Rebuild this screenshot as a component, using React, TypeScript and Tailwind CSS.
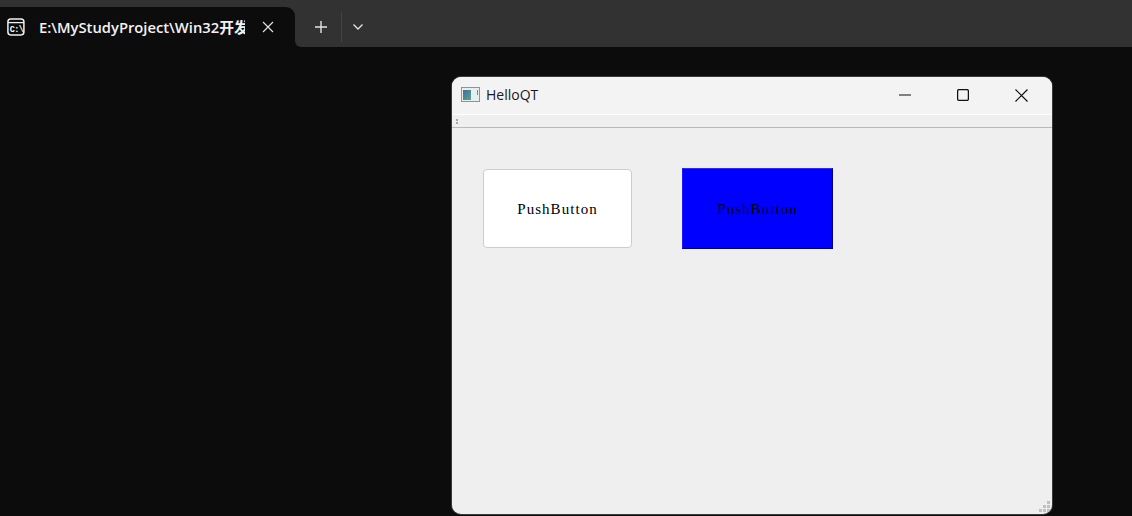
import React from "react";

const TerminalIcon = () => (
  <svg width="18" height="18" viewBox="0 0 18 18" fill="none" className="shrink-0">
    <rect x="0.9" y="0.9" width="16" height="16" rx="2.8" stroke="#f0f0f0" strokeWidth="1.5" />
    <line x1="1" y1="4.6" x2="17" y2="4.6" stroke="#f0f0f0" strokeWidth="1.3" />
    <text x="2.8" y="13.8" fontSize="8.5" fontWeight="700" fill="#ffffff" fontFamily="'Liberation Mono', monospace" letterSpacing="-0.6">C:\</text>
  </svg>
);

const QtIcon = () => (
  <svg width="20" height="16" viewBox="0 0 20 16" className="shrink-0">
    <defs>
      <linearGradient id="g" x1="0" y1="0" x2="1" y2="1">
        <stop offset="0" stopColor="#3f6f9f" />
        <stop offset="1" stopColor="#5aa58a" />
      </linearGradient>
    </defs>
    <rect x="0.5" y="0.5" width="18" height="14" fill="#e8eef0" stroke="#8f9498" />
    <rect x="2" y="3" width="8" height="10" fill="url(#g)" />
    <rect x="10" y="3" width="5" height="10" fill="#e4f0f0" />
    <rect x="16" y="3" width="1" height="5" fill="#4e9a8c" />
  </svg>
);

const Win = ({ children }: { children: React.ReactNode }) => (
  <div className="w-[58px] h-full flex items-center justify-center">{children}</div>
);

export default function App() {
  return (
    <div className="relative w-[1132px] h-[516px] overflow-hidden bg-[#0c0c0c] font-['Noto_Sans','Liberation_Sans',sans-serif]">
      {/* Terminal tab strip */}
      <div className="flex h-[47px]">
        <div className="w-[295px] h-full bg-[#323232] pt-[7px] shrink-0">
          <div className="h-[40px] bg-[#0c0c0c] rounded-tr-[9px] flex items-center pl-[7px] pb-[1px]">
            <TerminalIcon />
            <div className="ml-[14px] w-[206px] overflow-hidden whitespace-nowrap text-[14.75px] leading-[20px] font-semibold text-[#f2f2f2] font-['Open_Sans','Noto_Sans_CJK_SC',sans-serif]">
              E:\MyStudyProject\Win32开发
            </div>
            <svg width="12" height="12" viewBox="0 0 12 12" className="ml-[17px] shrink-0">
              <path d="M1 1L11 11M11 1L1 11" stroke="#e6e6e6" strokeWidth="1.1" />
            </svg>
          </div>
        </div>
        <div className="flex-1 bg-[#323232] flex items-center pt-[7px] rounded-bl-[6px]">
          <svg width="14" height="14" viewBox="0 0 14 14" className="ml-[19px]">
            <path d="M7 1V13M1 7H13" stroke="#e4e4e4" strokeWidth="1.4" />
          </svg>
          <div className="ml-[13px] w-px h-[30px] bg-[#444444]" />
          <svg width="12" height="8" viewBox="0 0 12 8" className="ml-[10px]">
            <path d="M1.5 1.5L6 6L10.5 1.5" stroke="#e4e4e4" strokeWidth="1.3" fill="none" />
          </svg>
        </div>
      </div>

      {/* HelloQT window */}
      <div className="absolute left-[452px] top-[77px] w-[600px] h-[437px] rounded-[9px] overflow-hidden bg-[#efefef] flex flex-col shadow-[0_0_0_1px_#3a3a3a]">
        <div className="h-[37px] bg-[#f3f3f3] flex items-center pl-[9px] pb-[1px] pr-[2px] shrink-0">
          <QtIcon />
          <span className="ml-[5px] text-[14px] leading-[20px] text-[#1a1a1a] font-['Open_Sans',sans-serif]">HelloQT</span>
          <div className="ml-auto h-full flex">
            <Win>
              <svg width="12" height="2" viewBox="0 0 12 2"><path d="M0 1H12" stroke="#111111" strokeWidth="1.2" /></svg>
            </Win>
            <Win>
              <svg width="12" height="12" viewBox="0 0 12 12"><rect x="0.6" y="0.6" width="10.8" height="10.8" rx="1.5" fill="none" stroke="#111111" strokeWidth="1.3" /></svg>
            </Win>
            <Win>
              <svg width="13" height="13" viewBox="0 0 13 13"><path d="M0.5 0.5L12.5 12.5M12.5 0.5L0.5 12.5" stroke="#111111" strokeWidth="1.2" /></svg>
            </Win>
          </div>
        </div>
        <div className="h-[14px] shrink-0 bg-[#efefef] border-t border-t-white border-b border-b-[#b9b9b9] pl-[4px] flex flex-col justify-center gap-[1px]">
          <div className="w-[2px] h-[2px] bg-[#a8a8a8]" />
          <div className="w-[2px] h-[2px] bg-[#a8a8a8]" />
        </div>
        <div className="relative flex-1 flex items-start pl-[31px] pt-[40px] font-['Liberation_Serif',serif] text-[15px] tracking-[1.05px] leading-[16px] text-black">
          <div className="mt-[1px] w-[149px] h-[79px] rounded-[4px] bg-white border border-[#cccccc] flex items-center justify-center">
            PushButton
          </div>
          <div className="ml-[50px] w-[151px] h-[81px] bg-[#0000ff] border border-t-[#2a2aff] border-l-[#1a1aff] border-r-[#000080] border-b-[#000060] flex items-center justify-center">
            PushButton
          </div>
          <div className="absolute right-[2px] bottom-[2px] grid grid-cols-3 gap-[1px]">
            <span /><span /><span className="w-[3px] h-[3px] bg-[#c0c0c0]" />
            <span /><span className="w-[3px] h-[3px] bg-[#c0c0c0]" /><span className="w-[3px] h-[3px] bg-[#c0c0c0]" />
            <span className="w-[3px] h-[3px] bg-[#c0c0c0]" /><span className="w-[3px] h-[3px] bg-[#c0c0c0]" /><span className="w-[3px] h-[3px] bg-[#c0c0c0]" />
          </div>
        </div>
      </div>
    </div>
  );
}
